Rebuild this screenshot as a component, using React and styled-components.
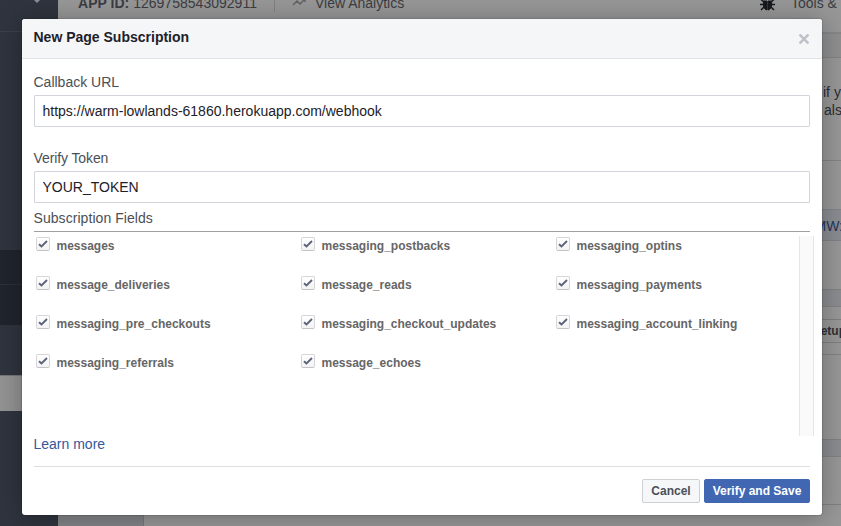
import React from 'react';
import styled, { createGlobalStyle } from 'styled-components';

const GlobalStyle = createGlobalStyle`
  * { box-sizing: border-box; }
  body {
    margin: 0;
    overflow: hidden;
    font-family: "Liberation Sans", Arial, Helvetica, sans-serif;
    font-size: 14px;
    color: #1d2129;
  }
`;

const Page = styled.div`
  position: relative;
  display: flex;
  width: 841px;
  height: 526px;
  overflow: hidden;
  background: #979797;
`;

const Sidebar = styled.aside`
  display: flex;
  flex-direction: column;
  flex: 0 0 58px;
  background: #2f343e;
`;

const SidebarTop = styled.div`
  height: 32px;
  padding-left: 31px;
  border-bottom: 1px solid #3a3f49;
  svg { display: block; margin-top: -5px; }
`;

const SidebarItem = styled.div`
  height: ${(p) => p.$height}px;
  background: ${(p) => p.$tone || 'transparent'};
  border-top: 1px solid ${(p) => p.$line || 'transparent'};
`;

const Content = styled.div`
  flex: 1;
  display: flex;
  flex-direction: column;
  min-width: 0;
`;

const AppBar = styled.div`
  display: flex;
  height: 34px;
  padding-left: 20px;
  border-bottom: 2px solid #868686;
  color: #3b3d42;
  white-space: nowrap;
  line-height: 16px;
`;

const AppId = styled.div`
  flex: none;
  width: 197px;
  height: 17px;
  margin-top: -5px;
  border-right: 1px solid #808080;
  letter-spacing: 0.02px;
`;

const Analytics = styled.div`
  display: flex;
  flex: none;
  gap: 9px;
  width: 485px;
  margin-top: -5px;
  padding-left: 17px;
  svg { margin-top: 2px; }
`;

const Tools = styled.div`
  display: flex;
  flex: none;
  gap: 16px;
  margin-top: -5px;
`;

const Band = styled.div`
  flex: none;
  height: ${(p) => p.$height}px;
  background: ${(p) => p.$tone || '#8a8c8f'};
  border-bottom: 1px solid #828282;
`;

const Panel = styled.div`
  display: flex;
  flex-direction: column;
  align-items: flex-end;
  flex: none;
  height: ${(p) => p.$height}px;
  background: #979797;
  border-bottom: 1px solid #818181;
`;

const Hint = styled.div`
  width: 19px;
  height: 103px;
  padding-top: 25px;
  line-height: 18px;
  border-bottom: 1px solid #838383;
  white-space: nowrap;
  overflow: hidden;
  color: #2b2d31;
`;

const Indent = styled.span`
  padding-left: ${(p) => p.$left}px;
`;

const TokenRow = styled.div`
  display: flex;
  justify-content: flex-end;
  width: 19px;
  height: 32px;
  margin-top: 48px;
  background: #898c91;
  border: solid #7f8287;
  border-width: 1px 0;
  line-height: 32px;
  color: #24365e;
  overflow: hidden;
  span { margin-right: -2px; }
`;

const SetupButton = styled.div`
  display: flex;
  justify-content: flex-end;
  width: 19px;
  height: 24px;
  margin: 12px 0 11px;
  border: solid #7e7e7e;
  border-width: 1px 0;
  line-height: 23px;
  font-size: 12px;
  font-weight: bold;
  color: #2e3035;
  overflow: hidden;
  span { margin-right: -5px; }
`;

const PanelLine = styled.div`
  width: 19px;
  height: 1px;
  background: #828282;
`;

const Footer = styled.div`
  flex: 1;
  width: 86px;
  background: #818386;
  border-right: 1px solid #777;
`;

const Dialog = styled.section`
  position: absolute;
  left: 22px;
  top: 19px;
  display: flex;
  flex-direction: column;
  width: 800px;
  height: 496px;
  border-radius: 3px;
  background: #fff;
  box-shadow: 0 2px 26px rgba(0, 0, 0, 0.3), 0 0 0 1px rgba(0, 0, 0, 0.1);
`;

const DialogHeader = styled.header`
  display: flex;
  justify-content: space-between;
  flex: none;
  height: 40px;
  padding: 10px 12px 0;
  background: #f5f6f7;
  border-bottom: 1px solid #e0e2e6;
  border-radius: 3px 3px 0 0;
`;

const Title = styled.h1`
  margin: 0 0 0 -0.5px;
  font-size: 14px;
  line-height: 17px;
`;

const CloseButton = styled.button`
  width: 12px;
  height: 12px;
  margin-top: 4px;
  padding: 1px;
  border: 0;
  background: none;
  svg { display: block; }
`;

const DialogBody = styled.div`
  display: flex;
  flex-direction: column;
  flex: 1;
  padding: 13px 12px 0;
`;

const Label = styled.label`
  height: 22px;
  margin: ${(p) => p.$gap || 0}px 0 0 -0.5px;
  padding-top: 2px;
  line-height: 17px;
  color: #4b4f56;
  letter-spacing: ${(p) => p.$spacing || 0}px;
`;

const Input = styled.input`
  flex: none;
  width: 776px;
  height: 32px;
  margin: 1px 0 0;
  padding: 0 7.5px;
  border: 1px solid #d3d5dd;
  border-radius: 1px;
  outline: 0;
  font: inherit;
  color: #1d2129;
`;

const FieldsHeading = styled.h2`
  flex: none;
  width: 776px;
  height: 29px;
  margin: 0;
  padding-top: 7px;
  border-bottom: 1px solid #a0a0a0;
  line-height: 17px;
  font-size: 14px;
  font-weight: normal;
  letter-spacing: 0.06px;
  text-indent: -0.5px;
  color: #4b4f56;
`;

const FieldsScroller = styled.div`
  display: flex;
  justify-content: space-between;
  flex: none;
  width: 780px;
  height: 200px;
  margin-top: 4px;
`;

const FieldGrid = styled.div`
  display: grid;
  grid-template-columns: 265px 255px 230px;
  grid-auto-rows: 39px;
  padding: 1px 0 0 2px;
`;

const Field = styled.label`
  display: flex;
  gap: 6.5px;
  height: 18px;
  line-height: 18px;
  font-size: 12px;
  font-weight: bold;
  color: #666;
`;

const Box = styled.span`
  flex: none;
  width: 14px;
  height: 14px;
  border: 1px solid #d6d6d8;
  border-bottom-color: #c4c4c8;
  border-radius: 2px;
  background: linear-gradient(#fff, #f3f3f5);
  svg { display: block; }
`;

const ScrollTrack = styled.div`
  width: 15px;
  background: #fafafa;
  border: solid #e6e6e6;
  border-width: 0 1px;
`;

const Learn = styled.a`
  height: 30px;
  margin-left: -0.5px;
  line-height: 17px;
  color: #365899;
`;

const Actions = styled.footer`
  display: flex;
  justify-content: flex-end;
  gap: 4px;
  width: 776px;
  padding-top: 12px;
  border-top: 1px solid #dcdee2;
`;

const Button = styled.button`
  width: ${(p) => p.$width}px;
  height: 24px;
  padding: 0 0 1px;
  border: 1px solid ${(p) => (p.$primary ? '#4267b2' : '#ced0d4')};
  border-radius: 2px;
  background: ${(p) => (p.$primary ? '#4267b2' : '#f6f7f9')};
  color: ${(p) => (p.$primary ? '#fff' : '#4b4f56')};
  font: bold 12px/23px "Liberation Sans", Arial, sans-serif;
`;

const FIELDS = [
  'messages', 'messaging_postbacks', 'messaging_optins',
  'message_deliveries', 'message_reads', 'messaging_payments',
  'messaging_pre_checkouts', 'messaging_checkout_updates', 'messaging_account_linking',
  'messaging_referrals', 'message_echoes',
];

function Check() {
  return (
    <Box>
      <svg width="12" height="12" viewBox="0 0 12 12" fill="none" stroke="#5a6378" strokeWidth="1.9">
        <path d="M2 6.2 4.5 8.5 10 3" />
      </svg>
    </Box>
  );
}

function BugIcon() {
  return (
    <svg width="15" height="16" viewBox="0 0 15 16" stroke="#17191d" fill="none">
      <path d="M4 4.5C4 1 11 1 11 4.5Z" fill="#17191d" />
      <path d="M3.5 6H7v9C4 14.5 3 11 3.5 6ZM8 6h3.500C12 11 11 14.500 8 15Z" fill="#17191d" />
      <path d="M1 4.500 4 7M0 9.500h4M1 15l3-3M14 4.500 11 7M15 9.500h-4M14 15l-3-3" strokeWidth="1.500" />
    </svg>
  );
}

export default function App() {
  return (
    <>
      <GlobalStyle />
      <Page>
        <Sidebar>
          <SidebarTop>
            <svg width="12" height="10" viewBox="0 0 12 10">
              <path d="M2 4l4 4 4-4Z" fill="#8b8e95" />
            </svg>
          </SidebarTop>
          <SidebarItem $height={218} />
          <SidebarItem $height={34} $tone="#20242c" />
          <SidebarItem $height={41} $tone="#20242c" $line="#2c3038" />
          <SidebarItem $height={50} />
          <SidebarItem $height={36} $tone="#939393" $line="#777" />
        </Sidebar>
        <Content>
          <AppBar>
            <AppId><b>APP ID:</b> 1269758543092911</AppId>
            <Analytics>
              <svg width="14" height="10" viewBox="0 0 14 10" fill="none" stroke="#606266" strokeWidth="1.500">
                <path d="M1 8 5 4l3 3 5-5M9.500 1.500H13V5" />
              </svg>
              View Analytics
            </Analytics>
            <Tools><BugIcon />Tools &amp; Support</Tools>
          </AppBar>
          <Band $height={24} $tone="#8f8f8f" />
          <Panel $height={232}>
            <Hint>
              <Indent $left={1}>if you</Indent><br />
              <Indent $left={2}>also</Indent>
            </Hint>
            <TokenRow><span>MW:</span></TokenRow>
          </Panel>
          <Band $height={17} />
          <Panel $height={133}>
            <SetupButton><span>Setup</span></SetupButton>
            <PanelLine />
          </Panel>
          <Band $height={17} />
          <Panel $height={48} />
          <Footer />
        </Content>
        <Dialog>
          <DialogHeader>
            <Title>New Page Subscription</Title>
            <CloseButton aria-label="Close">
              <svg width="10" height="10" viewBox="0 0 10 10" stroke="#bec2c9" strokeWidth="2.600">
                <path d="M0.500 0.500l9 9M9.500 0.500l-9 9" />
              </svg>
            </CloseButton>
          </DialogHeader>
          <DialogBody>
            <Label>Callback URL</Label>
            <Input readOnly value="https://warm-lowlands-61860.herokuapp.com/webhook" />
            <Label $gap={21} $spacing={-0.1}>Verify Token</Label>
            <Input readOnly value="YOUR_TOKEN" />
            <FieldsHeading>Subscription Fields</FieldsHeading>
            <FieldsScroller>
              <FieldGrid>
                {FIELDS.map((name) => (
                  <Field key={name}><Check />{name}</Field>
                ))}
              </FieldGrid>
              <ScrollTrack />
            </FieldsScroller>
            <Learn>Learn more</Learn>
            <Actions>
              <Button $width={58}>Cancel</Button>
              <Button $width={106} $primary>Verify and Save</Button>
            </Actions>
          </DialogBody>
        </Dialog>
      </Page>
    </>
  );
}
